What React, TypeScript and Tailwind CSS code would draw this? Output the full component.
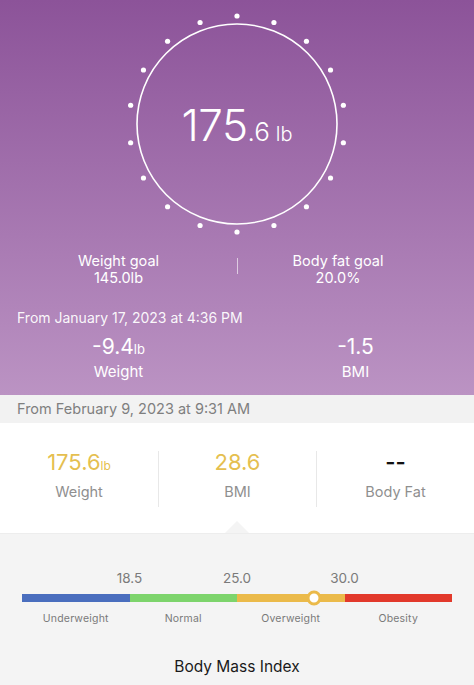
import React from "react";

const dots = Array.from({ length: 18 }, (_, i) => {
  const a = (i * 20 * Math.PI) / 180;
  return { x: 116 + 108 * Math.sin(a), y: 116 - 108 * Math.cos(a) };
});

function Dial() {
  return (
    <div className="relative mx-auto h-[232px] w-[232px]">
      <svg className="absolute inset-0" width="232" height="232" viewBox="0 0 232 232">
        <circle cx="116" cy="116" r="100" fill="none" stroke="white" strokeWidth="1.6" />
        {dots.map((d, i) => (
          <circle key={i} cx={d.x} cy={d.y} r="2.6" fill="white" />
        ))}
      </svg>
      <div className="absolute inset-0 flex items-center justify-center">
        <div className="flex items-baseline pt-[2px] text-white">
          <span className="text-[44px] font-light leading-none tracking-[-0.5px]">175</span>
          <span className="text-[26px] font-light leading-none">.6</span>
          <span className="ml-[6px] text-[20px] font-light leading-none">lb</span>
        </div>
      </div>
    </div>
  );
}

const segments = [
  { color: "bg-[#4a6ebe]", label: "Underweight", bound: "18.5" },
  { color: "bg-[#7dd46c]", label: "Normal", bound: "25.0" },
  { color: "bg-[#ebba4a]", label: "Overweight", bound: "30.0" },
  { color: "bg-[#e2392b]", label: "Obesity", bound: "" },
];

function bmiPos(v: number) {
  const edges = [10, 18.5, 25, 30, 40];
  for (let i = 0; i < 4; i++) {
    if (v <= edges[i + 1]) return (i + (v - edges[i]) / (edges[i + 1] - edges[i])) * 25;
  }
  return 100;
}

export default function App() {
  const bmi = 28.6;
  return (
    <div className="h-[685px] w-[474px] overflow-hidden bg-[#f4f4f4]" style={{ fontFamily: "Inter, 'Noto Sans', sans-serif" }}>
      {/* Purple header */}
      <div className="h-[395px] bg-gradient-to-b from-[#8c5399] to-[#bb93c3] pt-[8px] text-white">
        <Dial />
        <div className="mt-[12px] grid grid-cols-2 text-[14.5px] leading-[17px]">
          <div className="flex flex-col items-center">
            <span>Weight goal</span>
            <span>145.0lb</span>
          </div>
          <div className="relative flex flex-col items-center pr-[35px]">
            <div className="absolute left-0 top-[6px] h-[16px] w-px bg-white/60" />
            <span>Body fat goal</span>
            <span>20.0%</span>
          </div>
        </div>
        <div className="mt-[23px] pl-[17px] text-[14px] leading-[17px] text-white/95">From January 17, 2023 at 4:36 PM</div>
        <div className="mt-[10px] grid grid-cols-2">
          <div className="flex flex-col items-center">
            <div className="flex items-baseline leading-none">
              <span className="text-[21px]">-9.4</span>
              <span className="text-[13px]">lb</span>
            </div>
            <span className="mt-[6px] text-[15px] leading-[18px]">Weight</span>
          </div>
          <div className="flex flex-col items-center">
            <span className="text-[21px] leading-none">-1.5</span>
            <span className="mt-[6px] text-[15px] leading-[18px]">BMI</span>
          </div>
        </div>
      </div>

      {/* Date band */}
      <div className="flex h-[28px] items-center bg-[#f2f2f2] pl-[17px] text-[14.5px] text-[#7f7f7f]">
        From February 9, 2023 at 9:31 AM
      </div>

      {/* Stats */}
      <div className="relative h-[110px] bg-white pt-[28px]">
        <div className="grid grid-cols-3">
          <div className="flex flex-col items-center">
            <div className="flex items-baseline leading-none text-[#e5bf50]">
              <span className="text-[22px]">175.6</span>
              <span className="text-[12px]">lb</span>
            </div>
            <span className="mt-[10px] text-[14.5px] leading-[18px] text-[#8f8f8f]">Weight</span>
          </div>
          <div className="flex flex-col items-center border-l border-[#e8e8e8] pb-[6px]">
            <span className="text-[22px] leading-none text-[#e5bf50]">28.6</span>
            <span className="mt-[10px] text-[14.5px] leading-[18px] text-[#8f8f8f]">BMI</span>
          </div>
          <div className="flex flex-col items-center border-l border-[#e8e8e8] pb-[6px]">
            <span className="text-[22px] font-semibold leading-none text-[#111]">--</span>
            <span className="mt-[10px] text-[14.5px] leading-[18px] text-[#8f8f8f]">Body Fat</span>
          </div>
        </div>
        <div className="absolute bottom-0 left-[225px] h-0 w-0 border-x-[12px] border-b-[12px] border-x-transparent border-b-[#f4f4f4]" />
      </div>

      {/* BMI scale */}
      <div className="border-t border-[#ededed] bg-[#f4f4f4] px-[22px] pt-[36px]">
        <div className="grid grid-cols-4">
          {segments.map((s) => (
            <div key={s.label} className="flex h-[17px] justify-end">
              {s.bound && (
                <span className="translate-x-1/2 text-[13.5px] leading-[17px] text-[#7a7a7a]">{s.bound}</span>
              )}
            </div>
          ))}
        </div>
        <div className="relative mt-[7px] flex h-[8px]">
          {segments.map((s) => (
            <div key={s.label} className={`flex-1 ${s.color}`} />
          ))}
          <div
            className="absolute top-1/2 h-[15px] w-[15px] -translate-x-1/2 -translate-y-1/2 rounded-full border-[3px] border-[#ebba4a] bg-white"
            style={{ left: `${bmiPos(bmi)}%` }}
          />
        </div>
        <div className="mt-[10px] grid grid-cols-4">
          {segments.map((s) => (
            <div key={s.label} className="text-center text-[10.5px] leading-[14px] tracking-[0.2px] text-[#7a7a7a]">
              {s.label}
            </div>
          ))}
        </div>
        <div className="mt-[31px] text-center text-[15.5px] leading-[19px] text-[#1a1a1a]">Body Mass Index</div>
      </div>
    </div>
  );
}
